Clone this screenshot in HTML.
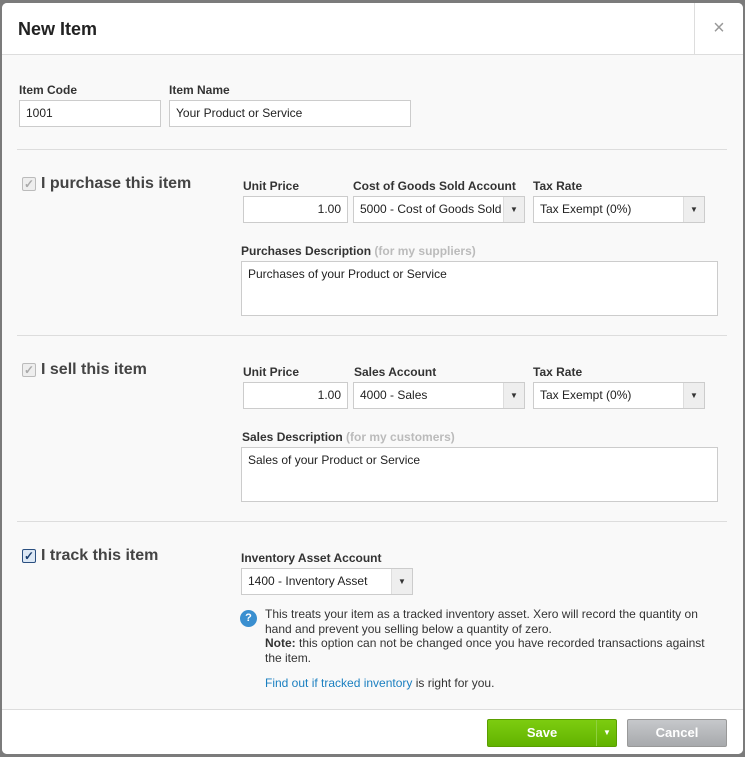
<!DOCTYPE html>
<html><head><meta charset="utf-8"><style>
*{box-sizing:border-box;margin:0;padding:0}
body{width:745px;height:757px;background:#7b7b7b;font-family:"Liberation Sans",Arial,sans-serif;font-size:12px;color:#222;position:relative;overflow:hidden}
.modal{position:absolute;left:2px;top:3px;width:741px;height:751px;background:#f9f9f9;border-radius:5px;overflow:hidden}
.hdr{position:absolute;left:0;top:0;width:741px;height:52px;background:#fff;border-bottom:1px solid #ddd}
.hdr h1{position:absolute;left:16px;top:16px;font-size:18px;font-weight:bold;color:#222}
.close{position:absolute;left:692px;top:0;width:49px;height:51px;border-left:1px solid #ddd;color:#999;font-size:20px;text-align:center;line-height:50px}
.a{position:absolute}
.lbl{position:absolute;font-weight:bold;font-size:12px;color:#333}
.in{position:absolute;background:#fff;border:1px solid #ccc;height:27px;padding:0 6px;line-height:25px;font-size:12px;color:#222}
.sel .ar{position:absolute;right:0;top:0;width:21px;height:25px;background:#eee;border-left:1px solid #ddd;font-size:8px;text-align:center;line-height:25px;color:#333}
.ta{position:absolute;background:#fff;border:1px solid #ccc;padding:5px 6px;font-size:12px}
.hr{position:absolute;left:15px;width:710px;height:1px;background:#ddd}
.chk{position:absolute;font-size:16px;font-weight:bold;color:#444;padding-left:19px}
.box{position:absolute;left:0;top:2px;width:14px;height:14px;border:1px solid #bbb;border-radius:2px;background:#eee;color:#aaa;font-size:12px;line-height:12px;text-align:center}
.box.on{border-color:#2a4f80;background:#dce8f5;color:#1a3f70}
.gray{color:#bbb}
.help{position:absolute;font-size:12px;line-height:14.5px;color:#333}
.ftr{position:absolute;left:0;top:706px;width:741px;height:45px;background:#fff;border-top:1px solid #ddd}
.save{position:absolute;left:485px;top:9px;width:130px;height:28px;border:1px solid #5a9e00;border-radius:2px;background:linear-gradient(#7dcc10,#62b300);color:#fff;font-weight:bold;font-size:13px}
.cancel{position:absolute;left:625px;top:9px;width:100px;height:28px;border:1px solid #999;border-radius:2px;background:linear-gradient(#c6c8cb,#a7a9ac);color:#fff;font-weight:bold;font-size:13px;text-align:center;line-height:26px}
</style></head><body>
<div class="modal">
<div class="hdr"><h1>New Item</h1><div class="close">×</div></div>

<div class="lbl" style="left:17px;top:80px">Item Code</div>
<div class="in" style="left:17px;top:97px;width:142px">1001</div>
<div class="lbl" style="left:167px;top:80px">Item Name</div>
<div class="in" style="left:167px;top:97px;width:242px">Your Product or Service</div>
<div class="hr" style="top:146px"></div>

<div class="chk" style="left:20px;top:172px"><span class="box">✓</span>I purchase this item</div>
<div class="lbl" style="left:241px;top:176px">Unit Price</div>
<div class="in" style="left:241px;top:193px;width:105px;text-align:right">1.00</div>
<div class="lbl" style="left:351px;top:176px">Cost of Goods Sold Account</div>
<div class="in sel" style="left:351px;top:193px;width:172px">5000 - Cost of Goods Sold<span class="ar">▼</span></div>
<div class="lbl" style="left:531px;top:176px">Tax Rate</div>
<div class="in sel" style="left:531px;top:193px;width:172px">Tax Exempt (0%)<span class="ar">▼</span></div>
<div class="lbl" style="left:239px;top:241px">Purchases Description <span class="gray">(for my suppliers)</span></div>
<div class="ta" style="left:239px;top:258px;width:477px;height:55px">Purchases of your Product or Service</div>
<div class="hr" style="top:332px"></div>

<div class="chk" style="left:20px;top:358px"><span class="box">✓</span>I sell this item</div>
<div class="lbl" style="left:241px;top:362px">Unit Price</div>
<div class="in" style="left:241px;top:379px;width:105px;text-align:right">1.00</div>
<div class="lbl" style="left:352px;top:362px">Sales Account</div>
<div class="in sel" style="left:351px;top:379px;width:172px">4000 - Sales<span class="ar">▼</span></div>
<div class="lbl" style="left:531px;top:362px">Tax Rate</div>
<div class="in sel" style="left:531px;top:379px;width:172px">Tax Exempt (0%)<span class="ar">▼</span></div>
<div class="lbl" style="left:240px;top:427px">Sales Description <span class="gray">(for my customers)</span></div>
<div class="ta" style="left:239px;top:444px;width:477px;height:55px">Sales of your Product or Service</div>
<div class="hr" style="top:518px"></div>

<div class="chk" style="left:20px;top:544px"><span class="box on">✓</span>I track this item</div>
<div class="lbl" style="left:239px;top:548px">Inventory Asset Account</div>
<div class="in sel" style="left:239px;top:565px;width:172px">1400 - Inventory Asset<span class="ar">▼</span></div>
<div class="a" style="left:238px;top:607px;width:17px;height:17px;border-radius:50%;background:#3a8fd0;color:#fff;font-weight:bold;font-size:11px;text-align:center;line-height:17px">?</div>
<div class="help" style="left:263px;top:604px;width:450px">This treats your item as a tracked inventory asset. Xero will record the quantity on hand and prevent you selling below a quantity of zero.<br><b>Note:</b> this option can not be changed once you have recorded transactions against the item.</div>
<div class="help" style="left:263px;top:673px"><span style="color:#1a7fc0">Find out if tracked inventory</span> is right for you.</div>

<div class="ftr">
<div class="save"><span style="position:absolute;left:0;width:108px;text-align:center;line-height:26px">Save</span><span style="position:absolute;left:108px;top:0;width:1px;height:26px;background:#8fd040"></span><span style="position:absolute;left:109px;width:20px;text-align:center;line-height:26px;font-size:8px">▼</span></div>
<div class="cancel">Cancel</div>
</div>
</div>
</body></html>
